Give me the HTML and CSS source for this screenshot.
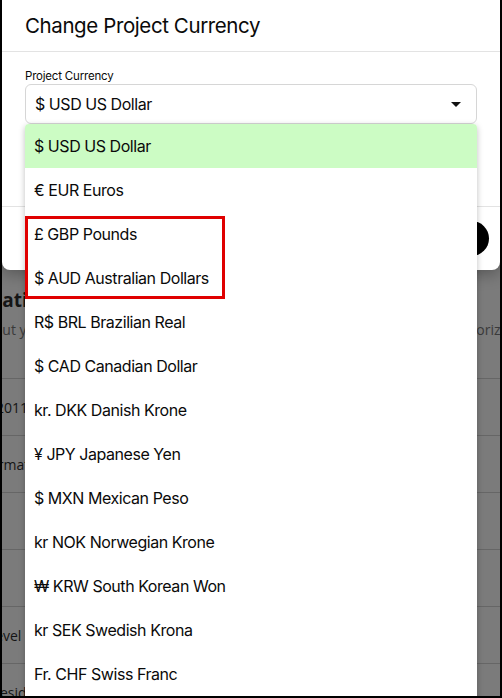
FILE: index.html
```html
<!DOCTYPE html>
<html lang="en">
<head>
  <meta charset="UTF-8" />
  <meta name="viewport" content="width=device-width, initial-scale=1.0" />
  <title>Change Project Currency</title>
  <link rel="stylesheet" href="styles.css">
</head>
<body>
  <div class="frame">
    <div class="page">
      <h2 class="page-title">Location Settings</h2>
      <p class="page-sub">All about your workspace, members, billing, invoices and all of the account authorization.</p>
      <div class="rows">
        <div class="row">Since 2011</div>
        <div class="row">Old format 12h</div>
        <div class="row"></div>
        <div class="row"></div>
        <div class="row">Risk Level</div>
        <div class="row">The President</div>
      </div>
    </div>

    <div class="modal">
      <div class="modal-head">Change Project Currency</div>
      <div class="modal-body">
        <label class="field-label">Project Currency</label>
        <div class="select">
          <span>$ USD US Dollar</span>
          <svg class="caret" width="10" height="5" viewBox="0 0 10 5"><path d="M0 0h10L5 5z" fill="#111"/></svg>
          <ul class="options">
            <li class="selected">$ USD US Dollar</li>
            <li>€ EUR Euros</li>
            <li>£ GBP Pounds</li>
            <li>$ AUD Australian Dollars</li>
            <li>R$ BRL Brazilian Real</li>
            <li>$ CAD Canadian Dollar</li>
            <li>kr. DKK Danish Krone</li>
            <li>¥ JPY Japanese Yen</li>
            <li>$ MXN Mexican Peso</li>
            <li>kr NOK Norwegian Krone</li>
            <li>₩ KRW South Korean Won</li>
            <li>kr SEK Swedish Krona</li>
            <li>Fr. CHF Swiss Franc</li>
            <li>₹ INR Indian Rupee</li>
          </ul>
          <div class="highlight"></div>
        </div>
      </div>
      <div class="modal-foot">
        <button class="btn">Save</button>
      </div>
    </div>
  </div>
</body>
</html>
```

FILE: styles.css
```css
* { box-sizing: border-box; }

body {
  margin: 0;
  background: #fff;
  font-family: Inter, "Noto Sans", sans-serif;
  color: #0a0a0a;
}

.frame {
  position: relative;
  width: 502px;
  height: 698px;
  border: 2px solid #000;
  border-top: none;
  background: #7b7b7b;
  overflow: hidden;
}

/* dimmed page behind the modal */
.page {
  padding-top: 284px;
  margin-left: -44px;
  color: #151515;
  font-family: "Open Sans", sans-serif;
}

.page-title {
  margin: 0 0 0 12px;
  font-size: 19px;
  font-weight: 700;
  line-height: 32px;
  white-space: nowrap;
}

.page-sub {
  margin: 4px 0 0;
  font-size: 14px;
  color: #3a3a3a;
  line-height: 20px;
  white-space: nowrap;
}

.rows {
  margin-top: 38px;
  border-top: 1px solid #666;
}

.row {
  height: 57px;
  border-bottom: 1px solid #666;
  display: flex;
  align-items: center;
  font-size: 14px;
  white-space: nowrap;
}

/* modal */
.modal {
  position: absolute;
  top: 0;
  left: 0;
  right: 0;
  height: 270px;
  background: #fff;
  border-radius: 0 0 8px 8px;
  box-shadow: 0 4px 16px rgba(0, 0, 0, 0.3);
}

.modal-head {
  height: 52px;
  padding: 0 23px;
  font-size: 20.5px;
  letter-spacing: -0.4px;
  line-height: 52px;
  border-bottom: 1px solid #e3e3e3;
}

.modal-body {
  height: 154px;
  padding: 16px 23px 0;
}

.field-label {
  display: block;
  font-size: 11.5px;
  letter-spacing: -0.2px;
  line-height: 16px;
}

.select {
  position: relative;
  height: 40px;
  display: flex;
  align-items: center;
  justify-content: space-between;
  padding: 0 15px 0 9px;
  border: 1px solid #d6d6d6;
  border-radius: 6px;
  font-size: 16px;
  letter-spacing: -0.45px;
}

.options {
  position: absolute;
  top: 39px;
  left: -1px;
  width: 452px;
  margin: 0;
  padding: 0;
  list-style: none;
  background: #fff;
  border-radius: 4px 4px 0 0;
  box-shadow: 0 2px 6px rgba(0, 0, 0, 0.25);
  z-index: 2;
}

.options li {
  height: 44px;
  line-height: 44px;
  padding-left: 9px;
  font-size: 16px;
}

.options li.selected {
  background: #ccfcc4;
  border-radius: 4px 4px 0 0;
}

.highlight {
  position: absolute;
  top: 131px;
  left: -1px;
  width: 200px;
  height: 83px;
  border: 3px solid #e00000;
  z-index: 3;
}

.modal-foot {
  height: 64px;
  border-top: 1px solid #e3e3e3;
  display: flex;
  align-items: center;
  justify-content: flex-end;
  padding-right: 11px;
}

.btn {
  height: 35px;
  padding: 0 24px;
  border: none;
  border-radius: 18px;
  background: #000;
  color: #fff;
  font-family: inherit;
  font-size: 14px;
}
```
